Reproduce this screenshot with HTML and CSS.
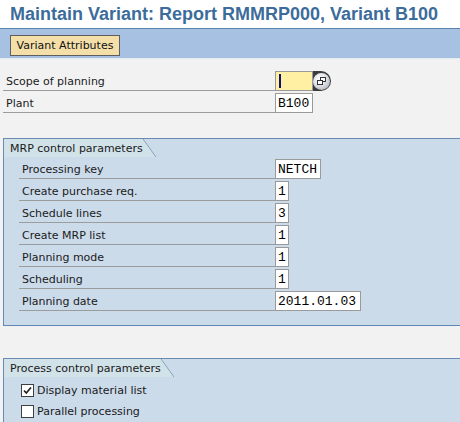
FILE: index.html
```html
<!DOCTYPE html>
<html>
<head>
<meta charset="utf-8">
<link rel="stylesheet" href="styles.css">
</head>
<body>
<header class="title">Maintain Variant: Report RMMRP000, Variant B100</header>
<div class="toolbar"><button class="btn">Variant Attributes</button></div>
<main class="content">
  <div class="rows top">
    <div class="row">
      <span class="label">Scope of planning</span>
      <span class="field w4 active"><span class="cursor"></span></span>
      <span class="help"><span class="help-circle"><svg width="9" height="8" viewBox="0 0 9 8"><rect x="3.5" y="0.5" width="5" height="4" fill="#fff" stroke="#333"/><rect x="0.5" y="3.5" width="5" height="4" fill="#fff" stroke="#333"/></svg></span></span>
    </div>
    <div class="row">
      <span class="label">Plant</span>
      <span class="field w4">B100</span>
    </div>
  </div>

  <section class="group g1">
    <div class="ghead"><span class="gtitle">MRP control parameters</span><span class="slant"></span></div>
    <div class="rows inner">
      <div class="row"><span class="label">Processing key</span><span class="field w5">NETCH</span></div>
      <div class="row"><span class="label">Create purchase req.</span><span class="field w1">1</span></div>
      <div class="row"><span class="label">Schedule lines</span><span class="field w1">3</span></div>
      <div class="row"><span class="label">Create MRP list</span><span class="field w1">1</span></div>
      <div class="row"><span class="label">Planning mode</span><span class="field w1">1</span></div>
      <div class="row"><span class="label">Scheduling</span><span class="field w1">1</span></div>
      <div class="row"><span class="label">Planning date</span><span class="field w10">2011.01.03</span></div>
    </div>
  </section>

  <section class="group g2">
    <div class="ghead"><span class="gtitle">Process control parameters</span><span class="slant"></span></div>
    <div class="checks">
      <div class="check"><span class="box"><svg width="11" height="11" viewBox="0 0 11 11"><path d="M2 5.5 L4.3 8 L9 2.5" fill="none" stroke="#222" stroke-width="1.7"/></svg></span>Display material list</div>
      <div class="check"><span class="box"></span>Parallel processing</div>
    </div>
  </section>
</main>
</body>
</html>
```

FILE: styles.css
```css
body {
  margin: 0;
  width: 460px;
  height: 422px;
  overflow: hidden;
  background: #f2f2f2;
  font-family: "DejaVu Sans", Verdana, sans-serif;
  font-size: 11px;
  color: #1a1a1a;
}

.title {
  height: 28px;
  background: #fff;
  border-bottom: 1px solid #5a84ae;
  font: bold 18px/28px "Liberation Sans", Arial, sans-serif;
  color: #3b6c9b;
  padding-left: 10px;
}

.toolbar {
  box-sizing: border-box;
  height: 30px;
  background: #a6c1e2;
  border-bottom: 1px solid #e4eaf1;
  padding: 6px 0 0 10px;
}

.btn {
  display: block;
  box-sizing: border-box;
  width: 110px;
  height: 21px;
  padding: 0;
  border: 1px solid #5e5e5e;
  background: #f4dfa9;
  font: 11px "DejaVu Sans", Verdana, sans-serif;
  color: #111;
}

.content {
  padding-top: 10px;
}

.row {
  display: flex;
  height: 22px;
  align-items: flex-end;
}

.label {
  box-sizing: border-box;
  height: 20px;
  border-bottom: 1px solid #9c9c9c;
  padding-left: 3px;
  line-height: 21px;
}

.top .label {
  width: 272px;
  margin-left: 3px;
}

.inner {
  padding-left: 15px;
}

.inner .label {
  width: 256px;
}

.field {
  box-sizing: border-box;
  height: 20px;
  border: 1px solid #9a9a9a;
  background: #fff;
  font: 13px/19px "Liberation Mono", "DejaVu Sans Mono", monospace;
  padding-left: 2px;
  color: #000;
}

.w1 { width: 14px; }
.w4 { width: 38px; }
.w5 { width: 46px; }
.w10 { width: 86px; }

.active {
  background: #fff0a3;
  display: flex;
  align-items: center;
}

.cursor {
  width: 2px;
  height: 14px;
  margin-left: 1px;
  background: #101070;
}

.help {
  display: flex;
  justify-content: flex-end;
  align-items: center;
  width: 18px;
  height: 20px;
  background: #3c3c3c;
  border-radius: 0 10px 10px 0;
}

.help-circle {
  display: flex;
  align-items: center;
  justify-content: center;
  width: 17px;
  height: 17px;
  border-radius: 50%;
  margin-right: 1px;
  background: radial-gradient(circle at 40% 35%, #ffffff 0%, #dde1e6 45%, #9aa0a8 100%);
}

.group {
  margin-left: 3px;
  border-top: 1px solid #6a8bb1;
  border-left: 1px solid #6a8bb1;
  background: #ccdbea;
}

.g1 {
  margin-top: 25px;
  padding-bottom: 14px;
  border-bottom: 1px solid #5d87b6;
}

.g2 {
  margin-top: 32px;
  height: 80px;
}

.ghead {
  display: flex;
  height: 18px;
}

.gtitle {
  background: #d1e2e9;
  padding-left: 6px;
  line-height: 19px;
}

.slant {
  width: 13px;
  background: linear-gradient(to top right, #d1e2e9 calc(50% - 0.7px), #7d9ab6 50%, transparent calc(50% + 0.7px));
}

.checks {
  padding-top: 3px;
}

.check {
  display: flex;
  align-items: center;
  height: 21px;
  padding-left: 17px;
}

.box {
  box-sizing: border-box;
  width: 13px;
  height: 13px;
  border: 1px solid #3f3f3f;
  background: #fff;
  margin-right: 3px;
  display: flex;
  align-items: center;
  justify-content: center;
}
```
